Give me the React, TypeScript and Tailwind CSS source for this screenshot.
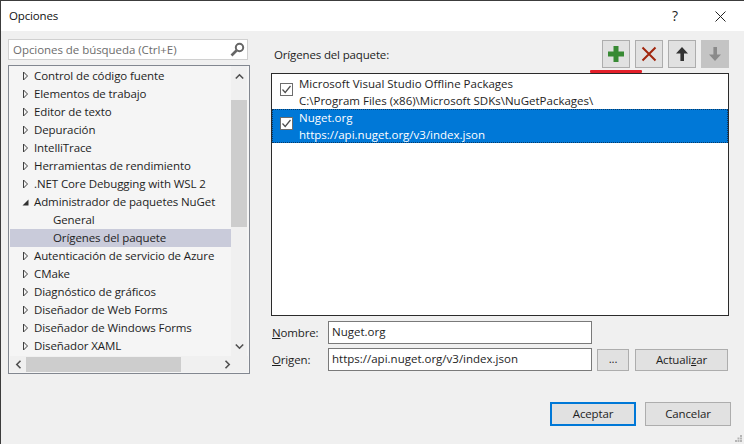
import React from "react";

const treeRows = [
  { label: "Control de código fuente", kind: "closed" },
  { label: "Elementos de trabajo", kind: "closed" },
  { label: "Editor de texto", kind: "closed" },
  { label: "Depuración", kind: "closed" },
  { label: "IntelliTrace", kind: "closed" },
  { label: "Herramientas de rendimiento", kind: "closed" },
  { label: ".NET Core Debugging with WSL 2", kind: "closed" },
  { label: "Administrador de paquetes NuGet", kind: "open" },
  { label: "General", kind: "child" },
  { label: "Orígenes del paquete", kind: "selected" },
  { label: "Autenticación de servicio de Azure", kind: "closed" },
  { label: "CMake", kind: "closed" },
  { label: "Diagnóstico de gráficos", kind: "closed" },
  { label: "Diseñador de Web Forms", kind: "closed" },
  { label: "Diseñador de Windows Forms", kind: "closed" },
  { label: "Diseñador XAML", kind: "closed" },
];

function Chevron({ d }: { d: string }) {
  return (
    <svg width="9" height="9" viewBox="0 0 9 9" fill="none" stroke="#505050" strokeWidth="1.6">
      <path d={d} />
    </svg>
  );
}

function TreeRow({ label, kind }: { label: string; kind: string }) {
  const isChild = kind === "child" || kind === "selected";
  return (
    <div className={`flex h-[18px] items-center ${kind === "selected" ? "bg-[#c9cbda]" : ""}`}>
      <div className="flex w-[24px] shrink-0 justify-end pr-[5px]">
        {kind === "closed" && (
          <svg width="7" height="10" viewBox="0 0 7 10" fill="none" stroke="#404040" strokeWidth="1">
            <path d="M1.5 1 L5.5 5 L1.5 9 Z" />
          </svg>
        )}
        {kind === "open" && (
          <svg width="7" height="7" viewBox="0 0 7 7" fill="#303030">
            <path d="M6.5 0.5 V6.5 H0.5 Z" />
          </svg>
        )}
      </div>
      <span className={`whitespace-nowrap text-[#1e1e1e] ${isChild ? "pl-[19px]" : ""}`}>{label}</span>
    </div>
  );
}

function CheckBox() {
  return (
    <div className="mb-[5px] flex h-[13px] w-[13px] shrink-0 items-center justify-center border border-[#6d6d6d] bg-white">
      <svg width="9" height="9" viewBox="0 0 9 9" fill="none" stroke="#4d4d4d" strokeWidth="1.2">
        <path d="M0.5 4.5 L3.2 7.5 L8.5 1" />
      </svg>
    </div>
  );
}

function ToolButton({ children, disabled }: { children: React.ReactNode; disabled?: boolean }) {
  return (
    <div
      className={`flex h-[28px] w-[28px] items-center justify-center border ${
        disabled ? "border-[#c4c4c4] bg-[#c4c4c4]" : "border-[#adadad] bg-[#e1e1e1]"
      }`}
    >
      {children}
    </div>
  );
}

function Field({ value }: { value: string }) {
  return (
    <div className="flex h-[23px] w-[264px] items-center border border-[#7a7a7a] bg-white pb-[2px] pl-[3px] tracking-[0px] text-[#1e1e1e]">
      {value}
    </div>
  );
}

export default function App() {
  return (
    <div className="relative flex h-[444px] w-[744px] flex-col overflow-hidden border-t border-l border-[#3c3c3c] bg-[#f0f0f0] text-[11.5px] leading-[16px] tracking-[-0.15px] text-[#1e1e1e] [font-family:'Open_Sans','Noto_Sans',sans-serif]">
      {/* Title bar */}
      <div className="flex h-[30px] shrink-0 items-center justify-between bg-white pl-[8px] pr-[18px]">
        <span className="text-[#111]">Opciones</span>
        <div className="flex items-center gap-[37px]">
          <span className="text-[14px] text-[#222]">?</span>
          <svg width="11" height="11" viewBox="0 0 11 11" stroke="#222" strokeWidth="1">
            <path d="M0.5 0.5 L10.5 10.5 M10.5 0.5 L0.5 10.5" />
          </svg>
        </div>
      </div>

      <div className="flex min-h-0 flex-1 pl-[7px]">
        {/* Left column */}
        <div className="flex w-[242px] shrink-0 flex-col pt-[8px]">
          <div className="flex h-[21px] w-[240px] items-center justify-between border border-[#d0d0d0] bg-white pl-[4px] pr-[2px] tracking-[-0.05px] text-[#6d6d6d]">
            <span>Opciones de búsqueda (Ctrl+E)</span>
            <svg width="15" height="15" viewBox="0 0 15 15" fill="none" stroke="#666" strokeWidth="2">
              <circle cx="9.5" cy="5.5" r="3.7" />
              <path d="M6.5 8.5 L1.5 13.5" strokeWidth="2.6" />
            </svg>
          </div>
          <div className="mt-[5px] flex h-[309px] w-[242px] flex-col border border-[#828790] bg-[#f5f5f5] pl-px tracking-[-0.1px]">
            <div className="flex h-[290px] shrink-0">
              <div className="w-[221px] shrink-0 overflow-hidden pt-px">
                {treeRows.map((r) => (
                  <TreeRow key={r.label} label={r.label} kind={r.kind} />
                ))}
              </div>
              <div className="flex w-[16px] shrink-0 flex-col items-center bg-[#f0f0f0]">
                <div className="flex h-[20px] items-center">
                  <Chevron d="M0.8 6.5 L4.5 2.8 L8.2 6.5" />
                </div>
                <div className="mt-[14px] h-[127px] w-full bg-[#cdcdcd]" />
                <div className="flex flex-1 items-end pb-[5px]">
                  <Chevron d="M0.8 2.5 L4.5 6.2 L8.2 2.5" />
                </div>
              </div>
            </div>
            <div className="flex h-[16px] w-[238px] items-center bg-[#f0f0f0]">
              <div className="flex w-[16px] justify-center">
                <Chevron d="M6.5 0.8 L2.8 4.5 L6.5 8.2" />
              </div>
              <div className="h-[15px] w-[155px] bg-[#cdcdcd]" />
              <div className="flex flex-1 justify-end pr-[16px]">
                <Chevron d="M2.5 0.8 L6.2 4.5 L2.5 8.2" />
              </div>
            </div>
          </div>
        </div>

        {/* Right column */}
        <div className="flex flex-1 flex-col pl-[21px]">
          <div className="relative flex h-[42px] shrink-0 pt-[9px]">
            <span className="pl-[3px] pt-[7px]">Orígenes del paquete:</span>
            <div className="ml-auto mr-[15px] flex gap-[5px]">
              <ToolButton>
                <svg width="16" height="16" viewBox="0 0 16 16" fill="#388a34">
                  <path d="M5.5 0 H10.5 V5.5 H16 V10.5 H10.5 V16 H5.5 V10.5 H0 V5.5 H5.5 Z" />
                </svg>
              </ToolButton>
              <ToolButton>
                <svg width="16" height="16" viewBox="0 0 16 16" fill="none" stroke="#a1260d" strokeWidth="2">
                  <path d="M1.5 1.5 L14.5 14.5 M14.5 1.5 L1.5 14.5" />
                </svg>
              </ToolButton>
              <ToolButton>
                <svg width="12" height="14" viewBox="0 0 12 14" fill="#333">
                  <path d="M6 0 L12 6.5 H8 V14 H4.4 V6.5 H0 Z" />
                </svg>
              </ToolButton>
              <ToolButton disabled>
                <svg width="12" height="14" viewBox="0 0 12 14" fill="#8a8a8a">
                  <path d="M6 14 L12 7.5 H8 V0 H4.4 V7.5 H0 Z" />
                </svg>
              </ToolButton>
            </div>
            <div className="absolute left-[319px] top-[39px] h-[3px] w-[52px] rounded-[1px] bg-[#e3202a]" />
          </div>

          <div className="h-[243px] w-[458px] shrink-0 border border-[#2b2b2b] bg-white pt-px tracking-[0px]">
            <div className="flex h-[34px] items-center pl-[8px]">
              <CheckBox />
              <div className="pl-[6px] leading-[17px]">
                <div className="whitespace-nowrap">Microsoft Visual Studio Offline Packages</div>
                <div className="whitespace-nowrap">C:\Program Files (x86)\Microsoft SDKs\NuGetPackages\</div>
              </div>
            </div>
            <div className="flex h-[34px] items-center bg-[#0078d7] pl-[8px] text-white outline-1 -outline-offset-1 outline-dotted outline-[#0a3a66]">
              <CheckBox />
              <div className="pl-[6px] leading-[17px]">
                <div>Nuget.org</div>
                <div>https://api.nuget.org/v3/index.json</div>
              </div>
            </div>
          </div>

          <div className="mt-[5px] flex items-center">
            <span className="w-[57px] pl-[1px]"><span className="underline">N</span>ombre:</span>
            <Field value="Nuget.org" />
          </div>
          <div className="mt-[4px] flex items-center">
            <span className="w-[57px] pl-[1px]"><span className="underline">O</span>rigen:</span>
            <Field value="https://api.nuget.org/v3/index.json" />
            <div className="ml-[5px] flex h-[22px] w-[32px] items-center justify-center border border-[#adadad] bg-[#e1e1e1] pb-[2px]">...</div>
            <div className="ml-[6px] flex h-[22px] w-[93px] items-center justify-center border border-[#adadad] bg-[#e1e1e1]">
              <span>Actuali<span className="underline">z</span>ar</span>
            </div>
          </div>

          <div className="mt-[31px] flex gap-[9px] pl-[279px]">
            <div className="flex h-[24px] w-[86px] items-center justify-center border-2 border-[#0078d7] bg-[#e1e1e1]">Aceptar</div>
            <div className="flex h-[24px] w-[86px] items-center justify-center border border-[#adadad] bg-[#e1e1e1]">Cancelar</div>
          </div>
        </div>
      </div>

      {/* Resize grip */}
      <svg className="absolute bottom-[2px] right-[2px]" width="7" height="7" viewBox="0 0 7 7" fill="#b5b5b5">
        <rect x="5" y="0" width="2" height="2" />
        <rect x="2.5" y="2.5" width="2" height="2" />
        <rect x="5" y="2.5" width="2" height="2" />
        <rect x="0" y="5" width="2" height="2" />
        <rect x="2.5" y="5" width="2" height="2" />
        <rect x="5" y="5" width="2" height="2" />
      </svg>
    </div>
  );
}
